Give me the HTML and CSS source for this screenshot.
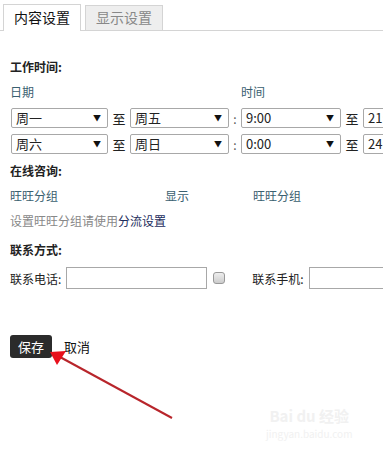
FILE: index.html
```html
<!DOCTYPE html>
<html lang="zh">
<head>
  <meta charset="UTF-8">
  <title>内容设置</title>
  <link rel="stylesheet" href="styles.css">
</head>
<body>
  <div class="tabs">
    <span class="tab activo">内容设置</span>
    <span class="tab">显示设置</span>
  </div>

  <div class="contenido">
    <div class="titulo t-primero">工作时间:</div>
    <div class="fila-etiquetas">
      <span class="col-fecha">日期</span>
      <span>时间</span>
    </div>

    <div class="fila-horario">
      <div class="sel s1">周一<span class="flecha">▼</span></div>
      <span class="sep">至</span>
      <div class="sel s2">周五<span class="flecha">▼</span></div>
      <span class="dos">:</span>
      <div class="sel s3">9:00<span class="flecha">▼</span></div>
      <span class="sep">至</span>
      <div class="sel s4">21:00<span class="flecha">▼</span></div>
    </div>
    <div class="fila-horario segunda">
      <div class="sel s1">周六<span class="flecha">▼</span></div>
      <span class="sep">至</span>
      <div class="sel s2">周日<span class="flecha">▼</span></div>
      <span class="dos">:</span>
      <div class="sel s3">0:00<span class="flecha">▼</span></div>
      <span class="sep">至</span>
      <div class="sel s4">24:00<span class="flecha">▼</span></div>
    </div>

    <div class="titulo">在线咨询:</div>
    <div class="fila-wangwang">
      <span class="c1">旺旺分组</span>
      <span class="c2">显示</span>
      <span>旺旺分组</span>
    </div>
    <div class="nota">设置旺旺分组请使用<a href="#" class="enlace">分流设置</a></div>

    <div class="titulo">联系方式:</div>
    <div class="fila-contacto">
      <span>联系电话:</span>
      <input type="text" class="campo">
      <span class="check"></span>
      <span class="lbl-movil">联系手机:</span>
      <input type="text" class="campo">
    </div>

    <div class="acciones">
      <button class="guardar">保存</button>
      <span class="cancelar">取消</span>
    </div>
  </div>

  <div class="marca">
    <div class="marca-logo">Bai du 经验</div>
    <div class="marca-url">jingyan.baidu.com</div>
  </div>

  <svg class="flecha-roja" width="383" height="452" viewBox="0 0 383 452">
    <line x1="172" y1="418" x2="60" y2="357" stroke="#b8252b" stroke-width="2"/>
    <polygon points="50,352 66,351 57,365" fill="#e8101c"/>
  </svg>
</body>
</html>
```

FILE: styles.css
```css
body {
  margin: 0;
  width: 383px;
  height: 452px;
  overflow: hidden;
  background: #fff;
  font-family: "Noto Sans CJK SC", "Liberation Sans", sans-serif;
  font-size: 12px;
  color: #222;
  position: relative;
}
.tabs {
  display: flex;
  align-items: flex-end;
  gap: 4px;
  height: 30px;
  padding-left: 3px;
  border-bottom: 1px solid #d4d4d4;
}
.tab {
  box-sizing: border-box;
  height: 25px;
  line-height: 23px;
  padding: 0 10px;
  font-size: 14px;
  color: #888;
  background: #eee;
  border: 1px solid #d4d4d4;
  border-bottom: none;
}
.tab.activo {
  height: 27px;
  margin-bottom: -1px;
  background: #fff;
  color: #111;
  line-height: 25px;
}
.contenido {
  padding-left: 10px;
  white-space: nowrap;
}
.titulo {
  font-weight: bold;
  line-height: 25px;
  margin-top: 4px;
}
.t-primero {
  margin-top: 23px;
}
.fila-etiquetas {
  display: flex;
  line-height: 25px;
  color: #3a6070;
}
.col-fecha {
  width: 231px;
}
.fila-horario {
  display: flex;
  align-items: center;
  height: 20px;
  margin-top: 4px;
  margin-left: 1px;
}
.fila-horario.segunda {
  margin-top: 6px;
}
.sel {
  box-sizing: border-box;
  position: relative;
  height: 20px;
  line-height: 18px;
  padding-left: 4px;
  border: 1px solid #a8a8a8;
  border-radius: 2px;
  font-size: 13px;
  color: #222;
  flex-shrink: 0;
}
.s1 { width: 97px; }
.s2 { width: 99px; }
.s3 { width: 100px; }
.s4 { width: 60px; }
.flecha {
  position: absolute;
  right: 6px;
  top: 0;
  font-size: 8px;
  color: #111;
}
.sep {
  width: 22px;
  text-align: center;
  font-size: 13px;
  flex-shrink: 0;
}
.dos {
  width: 12px;
  text-align: center;
  color: #555;
  flex-shrink: 0;
}
.fila-wangwang {
  display: flex;
  line-height: 25px;
  color: #3a6070;
}
.c1 { width: 155px; }
.c2 { width: 88px; }
.nota {
  line-height: 25px;
  color: #888;
}
.enlace {
  color: #1c2c5c;
  text-decoration: none;
}
.fila-contacto {
  display: flex;
  align-items: center;
  margin-top: 5px;
  height: 22px;
}
.campo {
  box-sizing: border-box;
  width: 141px;
  height: 22px;
  margin: 0 0 0 5px;
  border: 1px solid #a8a8a8;
  flex-shrink: 0;
}
.check {
  box-sizing: border-box;
  width: 12px;
  height: 12px;
  margin: 0 27px 0 6px;
  border: 1px solid #999;
  border-radius: 3px;
  background: linear-gradient(#eee, #ccc);
  flex-shrink: 0;
}
.acciones {
  display: flex;
  align-items: center;
  margin-top: 46px;
  gap: 12px;
}
.guardar {
  height: 23px;
  padding: 0 8px;
  background: #2b2b2b;
  color: #fff;
  border: none;
  border-radius: 3px;
  font-family: inherit;
  font-size: 13px;
}
.cancelar {
  font-size: 13px;
  color: #111;
}
.marca {
  position: absolute;
  left: 266px;
  top: 405px;
  color: #f1f1f1;
  text-align: center;
}
.marca-logo {
  font-size: 15px;
  font-weight: bold;
}
.marca-url {
  font-size: 10px;
}
.flecha-roja {
  position: absolute;
  left: 0;
  top: 0;
}
```
